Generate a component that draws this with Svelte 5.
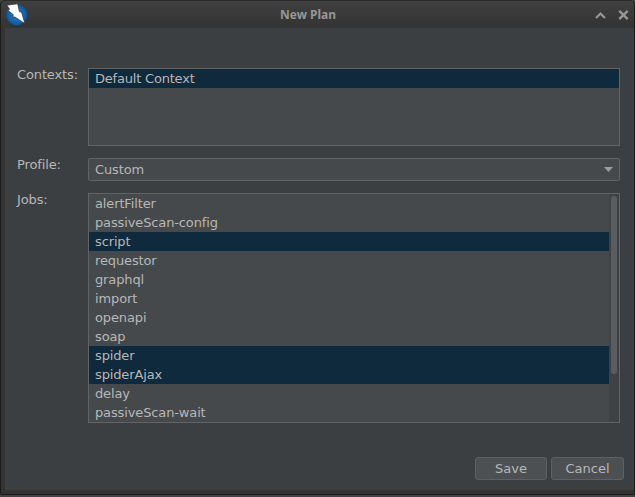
<script>
  const contexts = ['Default Context'];
  const jobs = ['alertFilter', 'passiveScan-config', 'script', 'requestor', 'graphql', 'import', 'openapi', 'soap', 'spider', 'spiderAjax', 'delay', 'passiveScan-wait'];
  let selected = $state(['script', 'spider', 'spiderAjax']);
  function toggle(job) {
    selected = selected.includes(job) ? selected.filter((j) => j !== job) : [...selected, job];
  }
</script>

<div class="screen">
  <div class="window">
    <header>
      <svg class="logo" width="24" height="26" viewBox="0 0 24 26">
        <defs>
          <radialGradient id="orb"><stop offset="0" stop-color="#1a80d4" /><stop offset=".7" stop-color="#1766ac" /><stop offset="1" stop-color="#15508a" /></radialGradient>
        </defs>
        <circle cx="11.7" cy="14.8" r="10.6" fill="url(#orb)" />
        <path d="M1.8 5.3 12.6 3.8 14.4 11.6 16.6 12.4 19.8 23.5 10 17 7.4 16.8 8.4 14.8 3.2 10.6 4.6 9Z" fill="#fff" stroke="#222" stroke-width=".6" />
      </svg>
      <h1>New Plan</h1>
      <svg class="controls" width="40" height="14" viewBox="0 0 40 14">
        <path d="M2 10 6.5 5.5 11 10" fill="none" stroke="#969696" stroke-width="2.2" />
        <path d="M25.3 2.8 33.7 11.2M33.7 2.8 25.3 11.2" fill="none" stroke="#969696" stroke-width="2.4" />
      </svg>
    </header>
    <main>
      <div class="row">
        <span class="label">Contexts:</span>
        <div class="list contexts">
          <ul>{#each contexts as c}<li class="on">{c}</li>{/each}</ul>
        </div>
      </div>
      <div class="row">
        <span class="label">Profile:</span>
        <div class="combo">
          <span>Custom</span>
          <svg width="9" height="5" viewBox="0 0 9 5"><path d="M0 0H9L4.5 5Z" fill="#9a9da0" /></svg>
        </div>
      </div>
      <div class="row">
        <span class="label">Jobs:</span>
        <div class="list jobs">
          <ul>
            {#each jobs as job}
              <!-- svelte-ignore a11y_click_events_have_key_events, a11y_no_noninteractive_element_interactions -->
              <li class:on={selected.includes(job)} onclick={() => toggle(job)}>{job}</li>
            {/each}
          </ul>
          <div class="track"><div class="thumb"></div></div>
        </div>
      </div>
      <footer>
        <button class="save">Save</button>
        <button class="cancel">Cancel</button>
      </footer>
    </main>
  </div>
</div>

<style>
  :global(body) { margin: 0; background: #414446; }
  .screen {
    box-sizing: border-box; width: 635px; height: 497px; overflow: hidden;
    background: #414446; font: 13px/19px "DejaVu Sans", sans-serif; color: #b7b7b7;
  }
  .window {
    box-sizing: border-box; width: 635px; height: 495px;
    border: 1px solid #1c1c1c; border-top-color: #2b2b2b; border-radius: 5px 5px 2px 2px;
    background: linear-gradient(#404040, #333 27px, #353332 28px);
    padding: 0 0 4px 4px; display: flex; flex-direction: column;
  }
  header { height: 27px; display: flex; align-items: flex-start; }
  .logo { margin-top: -1px; flex: none; }
  h1 {
    margin: 4px 0 0; flex: 1; padding-left: 251px; font: bold 12px/19px "Noto Sans", sans-serif;
    color: #969696;
  }
  .controls { margin: 7px 0 0; }
  main {
    flex: 1; background: #3c3f41; padding: 40px 14px 0 12px;
    display: flex; flex-direction: column; gap: 12px;
  }
  .row { display: flex; letter-spacing: -0.13px; }
  .label { width: 71px; margin-top: -3px; }
  .list, .combo { box-sizing: border-box; flex: 1; background: #46494b; border: 1px solid #616365; }
  .list { display: flex; overflow: hidden; }
  .contexts { height: 78px; }
  .contexts li { letter-spacing: -0.2px; }
  .jobs { height: 230px; }
  ul { list-style: none; margin: 0; padding: 0; flex: 1; }
  li { height: 19px; padding-left: 6px; }
  li.on { background: #0f2a3d; }
  .track { width: 10px; background: #3f4244; padding: 2px; box-sizing: border-box; }
  .thumb { width: 6px; height: 178px; border-radius: 3px; background: #595d5f; }
  .combo {
    height: 23px; border-radius: 2px; padding: 0 6px;
    display: flex; align-items: center; justify-content: space-between;
  }
  footer { display: flex; justify-content: flex-end; gap: 4px; margin: 22px -4px 0 0; }
  button {
    box-sizing: border-box; height: 23px; padding: 0; border: 1px solid #5e6062; border-radius: 3px;
    background: #4d5052; color: #b7b7b7; font: 13px/19px "DejaVu Sans", sans-serif;
  }
  .save { width: 72px; }
  .cancel { width: 73px; }
</style>
